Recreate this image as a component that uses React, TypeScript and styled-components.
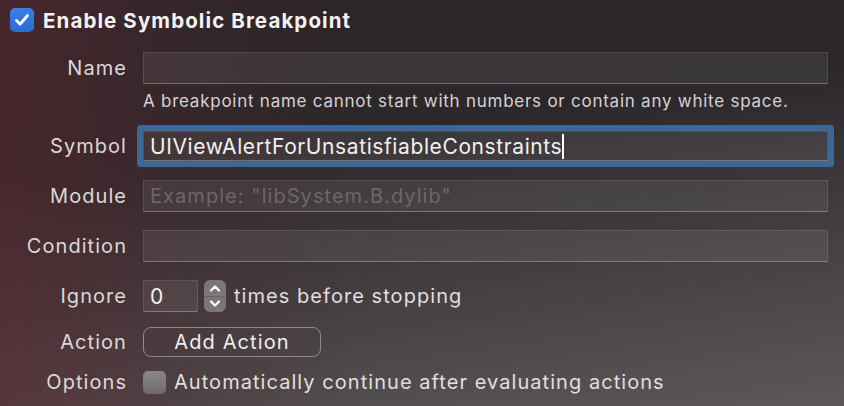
import React from "react";
import styled, { createGlobalStyle } from "styled-components";

const Global = createGlobalStyle`
  html, body { margin: 0; padding: 0; }
  body { width: 844px; height: 406px; overflow: hidden; }
  #root { width: 844px; height: 406px; }
`;

const Panel = styled.div`
  width: 844px;
  height: 406px;
  box-sizing: border-box;
  padding: 8px 16px 0 10px;
  font-family: Inter, "Open Sans", "Liberation Sans", sans-serif;
  color: #dedadb;
  background:
    linear-gradient(to right, rgba(95, 40, 48, 0.55) 0%, rgba(80, 40, 46, 0.25) 22%, rgba(0, 0, 0, 0) 45%),
    linear-gradient(172deg, #2a2528 0%, #2b272a 35%, #4a4648 75%, #5c5859 100%);
  display: flex;
  flex-direction: column;
`;

const TitleRow = styled.label`
  display: flex;
  align-items: center;
  gap: 9px;
  height: 24px;
`;

const BlueCheck = styled.span`
  width: 24px;
  height: 24px;
  border-radius: 5px;
  background: linear-gradient(#3a7ee6, #2c6bd6);
  display: flex;
  align-items: center;
  justify-content: center;
`;

const Title = styled.span`
  font-size: 20.5px;
  font-weight: 700;
  color: #f4f2f3;
  letter-spacing: 1.1px;
`;

const Row = styled.div<{ $mt: number; $h: number }>`
  display: grid;
  grid-template-columns: 116px 1fr;
  column-gap: 17px;
  align-items: center;
  margin-top: ${(p) => p.$mt}px;
  height: ${(p) => p.$h}px;
`;

const Label = styled.span`
  text-align: right;
  font-size: 20px;
  letter-spacing: 1.05px;
  margin-right: -1px;
  color: #dcd8d9;
  white-space: nowrap;
`;

const Field = styled.div<{ $focus?: boolean; $w?: number }>`
  box-sizing: border-box;
  height: ${(p) => (p.$focus ? 30 : 32)}px;
  width: ${(p) => (p.$w ? `${p.$w}px` : "auto")};
  background: rgba(255, 255, 255, 0.07);
  border: 1px solid rgba(255, 255, 255, 0.1);
  border-bottom: 1px solid rgba(255, 255, 255, 0.28);
  display: flex;
  align-items: center;
  padding-left: 6px;
  font-size: 21px;
  letter-spacing: 0.6px;
  color: #f2f0f1;
  white-space: nowrap;
  ${(p) => (p.$focus ? `box-shadow: 0 0 0 6px #3c6898; border-radius: 1px;` : "")}
`;

const Placeholder = styled.span`
  color: #6c6769;
  font-size: 20px;
  letter-spacing: 1.05px;
`;

const Caret = styled.span`
  display: inline-block;
  width: 2px;
  height: 25px;
  background: #ffffff;
  margin-left: 0px;
`;

const Hint = styled.div`
  margin-top: 7px;
  margin-left: 133px;
  font-size: 17px;
  letter-spacing: 0.75px;
  line-height: 20px;
  color: #d6d2d3;
  white-space: nowrap;
`;

const Inline = styled.div`
  display: flex;
  align-items: center;
  gap: 8px;
`;

const Stepper = styled.div`
  width: 22px;
  height: 32px;
  border-radius: 6px;
  background: #7b7778;
  display: flex;
  flex-direction: column;
  align-items: center;
  justify-content: space-around;
  margin-left: -2px;
  position: relative;
  &::after {
    content: "";
    position: absolute;
    left: 0;
    right: 0;
    top: 50%;
    height: 1px;
    background: rgba(0, 0, 0, 0.15);
  }
`;

const InlineText = styled.span`
  font-size: 20px;
  letter-spacing: 1.05px;
  color: #e2dedf;
  white-space: nowrap;
`;

const Button = styled.div`
  box-sizing: border-box;
  width: 178px;
  height: 30px;
  border: 1.5px solid #8e8a8b;
  border-radius: 8px;
  display: flex;
  align-items: center;
  justify-content: center;
  font-size: 20px;
  letter-spacing: 1.1px;
  color: #f0eeef;
`;

const GreyCheck = styled.span`
  width: 23px;
  height: 23px;
  border-radius: 5px;
  background: linear-gradient(#8a8687, #6f6b6c);
  flex-shrink: 0;
`;

const Chevron = ({ up }: { up?: boolean }) => (
  <svg width="12" height="8" viewBox="0 0 12 8">
    <path
      d={up ? "M2 6.5 L6 2.5 L10 6.5" : "M2 1.5 L6 5.5 L10 1.5"}
      fill="none"
      stroke="#ffffff"
      strokeWidth="2.2"
      strokeLinecap="round"
      strokeLinejoin="round"
    />
  </svg>
);

export default function App() {
  return (
    <>
      <Global />
      <Panel>
        <TitleRow>
          <BlueCheck>
            <svg width="16" height="14" viewBox="0 0 16 14">
              <path
                d="M2.5 7.5 L6.2 11.2 L13.5 2.5"
                fill="none"
                stroke="#ffffff"
                strokeWidth="2.8"
                strokeLinecap="round"
                strokeLinejoin="round"
              />
            </svg>
          </BlueCheck>
          <Title>Enable Symbolic Breakpoint</Title>
        </TitleRow>

        <Row $mt={20} $h={32}>
          <Label>Name</Label>
          <Field />
        </Row>
        <Hint>A breakpoint name cannot start with numbers or contain any white space.</Hint>

        <Row $mt={20} $h={30}>
          <Label>Symbol</Label>
          <Field $focus>
            UIViewAlertForUnsatisfiableConstraints
            <Caret />
          </Field>
        </Row>

        <Row $mt={19} $h={32}>
          <Label>Module</Label>
          <Field>
            <Placeholder>Example: "libSystem.B.dylib"</Placeholder>
          </Field>
        </Row>

        <Row $mt={18} $h={32}>
          <Label>Condition</Label>
          <Field />
        </Row>

        <Row $mt={18} $h={32}>
          <Label>Ignore</Label>
          <Inline>
            <Field $w={55}>0</Field>
            <Stepper>
              <Chevron up />
              <Chevron />
            </Stepper>
            <InlineText>times before stopping</InlineText>
          </Inline>
        </Row>

        <Row $mt={15} $h={30}>
          <Label>Action</Label>
          <Button>Add Action</Button>
        </Row>

        <Row $mt={13} $h={24}>
          <Label>Options</Label>
          <Inline>
            <GreyCheck />
            <InlineText>Automatically continue after evaluating actions</InlineText>
          </Inline>
        </Row>
      </Panel>
    </>
  );
}
